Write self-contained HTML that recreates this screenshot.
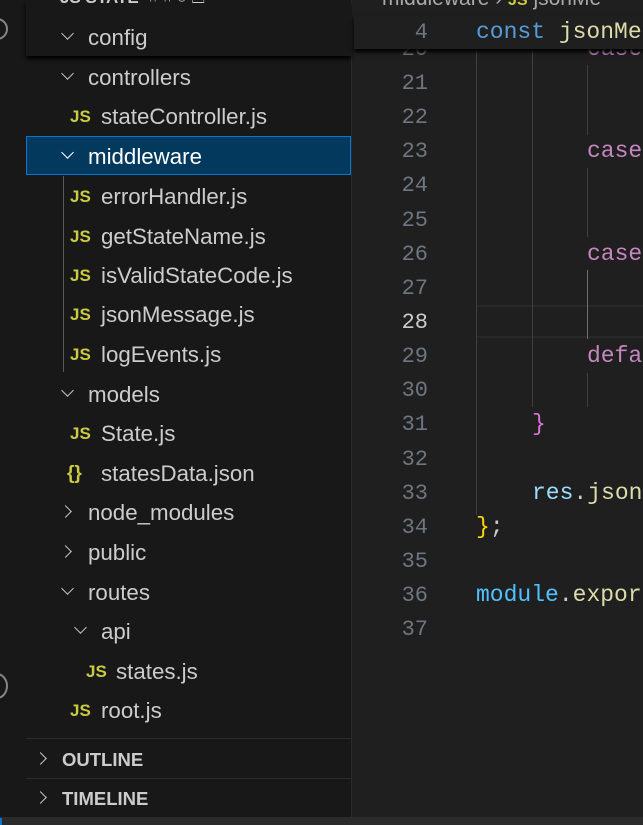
<!DOCTYPE html>
<html><head><meta charset="utf-8"><style>
*{margin:0;padding:0;box-sizing:border-box}
body{width:643px;height:825px;overflow:hidden;background:#1f1f1f;position:relative;font-family:"Liberation Sans",sans-serif}
.act{position:absolute;left:0;top:0;width:26px;height:825px;background:#181818}
.side{position:absolute;left:26px;top:0;width:326px;height:825px;background:#181818;border-right:1px solid #2b2b2b}
.row{position:absolute;left:26px;width:325px;height:39px;color:#cccccc;font-size:22.3px;line-height:41px;white-space:nowrap}
.row span{position:absolute}
.chev{position:absolute;width:9px;height:9px;border-left:1.6px solid #c5c5c5;border-bottom:1.6px solid #c5c5c5}
.down{transform:rotate(-45deg)}
.right{transform:rotate(-135deg)}
.js{color:#cbcb41;font-weight:bold;font-size:17px;letter-spacing:0px}
.sel{background:#04395e;border:1px solid #0078d4;color:#fff}
.hdr{font-weight:bold;font-size:18.5px;color:#cccccc}
.ed{position:absolute;left:352px;top:0;right:0;bottom:0;font-family:"Liberation Mono",monospace;font-size:23px}
.ln{position:absolute;left:0;width:76px;text-align:right;color:#6e7681;font-size:22px}
.code{position:absolute;white-space:pre}
.guide{position:absolute;width:1px;background:#404040}
</style></head><body>
<div class="act"></div>
<div style="position:absolute;left:-14px;top:18px;width:22px;height:22px;border:2px solid #868686;border-radius:50%"></div>
<div style="position:absolute;left:-14px;top:673px;width:22px;height:26px;border:2px solid #868686;border-radius:50%"></div>
<div class="side"></div>
<div style="position:absolute;left:26px;top:0;width:325px;height:56px;background:#181818;box-shadow:0 3px 4px #000;"></div>
<div style="position:absolute;left:60px;top:-12px;color:#ccc;font-weight:bold;font-size:17px">JS STATE &nbsp;<span style="font-weight:normal">⌗ ⌗ ○ ▭</span></div>

<div class="row" style="top:17px"><i class="chev down" style="left:37px;top:12px"></i><span style="left:62px">config</span></div>
<div class="row" style="top:57px"><i class="chev down" style="left:37px;top:12px"></i><span style="left:62px">controllers</span></div>
<div class="row" style="top:96px"><span class="js" style="left:44px">JS</span><span style="left:75px">stateController.js</span></div>
<div class="row sel" style="top:136px"><i class="chev down" style="left:36px;top:11px;border-color:#fff"></i><span style="left:61px;top:-1px">middleware</span></div>
<div style="position:absolute;left:63px;top:176px;width:1px;height:196px;background:#585858"></div>
<div class="row" style="top:176px"><span class="js" style="left:44px">JS</span><span style="left:75px">errorHandler.js</span></div>
<div class="row" style="top:216px"><span class="js" style="left:44px">JS</span><span style="left:75px">getStateName.js</span></div>
<div class="row" style="top:255px"><span class="js" style="left:44px">JS</span><span style="left:75px">isValidStateCode.js</span></div>
<div class="row" style="top:294px"><span class="js" style="left:44px">JS</span><span style="left:75px">jsonMessage.js</span></div>
<div class="row" style="top:334px"><span class="js" style="left:44px">JS</span><span style="left:75px">logEvents.js</span></div>
<div class="row" style="top:374px"><i class="chev down" style="left:37px;top:12px"></i><span style="left:62px">models</span></div>
<div class="row" style="top:413px"><span class="js" style="left:44px">JS</span><span style="left:75px">State.js</span></div>
<div class="row" style="top:453px"><span style="left:41px;color:#cbcb41;font-weight:bold;font-size:19px">{}</span><span style="left:75px">statesData.json</span></div>
<div class="row" style="top:492px"><i class="chev right" style="left:35px;top:15px"></i><span style="left:62px">node_modules</span></div>
<div class="row" style="top:532px"><i class="chev right" style="left:35px;top:15px"></i><span style="left:62px">public</span></div>
<div class="row" style="top:572px"><i class="chev down" style="left:37px;top:12px"></i><span style="left:62px">routes</span></div>
<div class="row" style="top:611px"><i class="chev down" style="left:50px;top:12px"></i><span style="left:75px">api</span></div>
<div class="row" style="top:651px"><span class="js" style="left:60px">JS</span><span style="left:90px">states.js</span></div>
<div class="row" style="top:690px"><span class="js" style="left:44px">JS</span><span style="left:75px">root.js</span></div>

<div style="position:absolute;left:26px;top:738px;width:325px;height:1px;background:#2b2b2b"></div>
<div class="row" style="top:739px"><i class="chev right" style="left:10px;top:15px"></i><span class="hdr" style="left:36px">OUTLINE</span></div>
<div style="position:absolute;left:26px;top:778px;width:325px;height:1px;background:#2b2b2b"></div>
<div class="row" style="top:778px"><i class="chev right" style="left:10px;top:15px"></i><span class="hdr" style="left:36px">TIMELINE</span></div>
<div style="position:absolute;left:0;top:817px;width:643px;height:8px;background:#2b2b2b"></div>
<div style="position:absolute;left:0;top:818px;width:2px;height:7px;background:#0078d4"></div>

<div class="ed">
<div style="position:absolute;left:124px;top:305px;right:0;height:33px;border-top:2px solid #282828;border-bottom:2px solid #282828"></div>
<div class="guide" style="left:124px;top:50px;height:465px"></div>
<div class="guide" style="left:180px;top:50px;height:357px"></div>
<div class="guide" style="left:235px;top:65px;height:70px"></div>
<div class="guide" style="left:235px;top:168px;height:69px"></div>
<div class="guide" style="left:235px;top:270px;height:69px;background:#707070"></div>
<div class="guide" style="left:235px;top:373px;height:34px"></div>

<div class="ln" style="top:37px">20</div>
<div class="ln" style="top:71px">21</div>
<div class="ln" style="top:105px">22</div>
<div class="ln" style="top:139px">23</div>
<div class="ln" style="top:173px">24</div>
<div class="ln" style="top:208px">25</div>
<div class="ln" style="top:242px">26</div>
<div class="ln" style="top:276px">27</div>
<div class="ln" style="top:310px;color:#cccccc">28</div>
<div class="ln" style="top:344px">29</div>
<div class="ln" style="top:378px">30</div>
<div class="ln" style="top:412px">31</div>
<div class="ln" style="top:447px">32</div>
<div class="ln" style="top:481px">33</div>
<div class="ln" style="top:515px">34</div>
<div class="ln" style="top:549px">35</div>
<div class="ln" style="top:583px">36</div>
<div class="ln" style="top:617px">37</div>

<div class="code" style="left:235px;top:36px;color:#c586c0">case</div>
<div class="code" style="left:235px;top:138px;color:#c586c0">case</div>
<div class="code" style="left:235px;top:241px;color:#c586c0">case</div>
<div class="code" style="left:235px;top:343px;color:#c586c0">defa</div>
<div class="code" style="left:180px;top:411px;color:#da70d6">}</div>
<div class="code" style="left:180px;top:480px"><span style="color:#9cdcfe">res</span><span style="color:#ccc">.</span><span style="color:#dcdcaa">json</span></div>
<div class="code" style="left:124px;top:514px"><span style="color:#ffd700">}</span><span style="color:#ccc">;</span></div>
<div class="code" style="left:124px;top:582px"><span style="color:#4fc1ff">module</span><span style="color:#ccc">.</span><span style="color:#dcdcaa">export</span></div>

<div style="position:absolute;left:0;top:0;right:0;height:17px;background:#1f1f1f;overflow:hidden">
<div class="code" style="left:30px;top:-13px;font-family:'Liberation Sans',sans-serif;font-size:21px;color:#a9a9a9">middleware › <span style="color:#cbcb41;font-weight:bold;font-size:16px">JS</span> jsonMe</div></div>
<div style="position:absolute;left:2px;top:17px;right:0;height:32px;background:#1f1f1f;box-shadow:0 3px 4px #000"></div>
<div class="ln" style="top:20px">4</div>
<div class="code" style="left:124px;top:19px"><span style="color:#569cd6">const</span> <span style="color:#dcdcaa">jsonMe</span></div>
</div>
</body></html>
